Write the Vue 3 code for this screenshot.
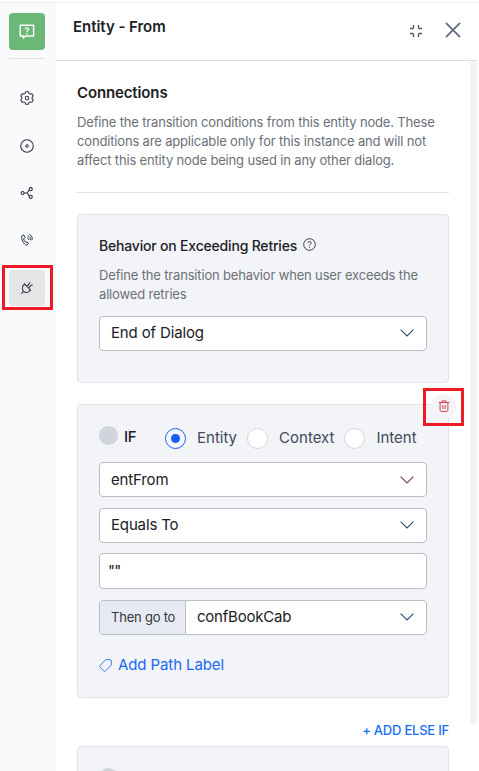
<script setup>
const radios = [
  { label: 'Entity', on: true },
  { label: 'Context', on: false },
  { label: 'Intent', on: false },
]
const selects = ['entFrom', 'Equals To']
</script>

<template>
  <div class="page">
    <nav class="side">
      <div class="logo">
        <svg width="16" height="16" viewBox="0 0 16 16" fill="none" stroke="#fff" stroke-width="1.4" stroke-linejoin="round">
          <path d="M1.2 1.2H14.6V12H6.3L4.3 14.1V12H1.2Z" />
          <path d="M6.2 5.2C6.2 3.5 9.6 3.5 9.6 5.2C9.6 6.5 7.9 6.3 7.9 7.8M7.9 8.9V10.2" stroke-width="1.3" />
        </svg>
      </div>
      <div class="rule"></div>
      <div class="item gear">
        <svg width="14" height="14" viewBox="0 0 14 14" fill="none" stroke="#30343c" stroke-width="1.05" stroke-linejoin="round">
          <path d="M5.7 .7H8.3L8.8 2.4L10.1 3.1L11.9 2.7L13.3 5L12.1 6.3V7.7L13.3 9L11.9 11.3L10.1 10.9L8.8 11.6L8.3 13.3H5.7L5.2 11.6L3.9 10.9L2.1 11.3L.7 9L1.9 7.7V6.3L.7 5L2.1 2.7L3.9 3.1L5.2 2.4Z" />
          <circle cx="7" cy="7" r="1.8" />
        </svg>
      </div>
      <div class="item">
        <svg width="14" height="14" viewBox="0 0 14 14" fill="none" stroke="#30343c" stroke-width="1.05">
          <circle cx="7" cy="7" r="6.3" />
          <circle cx="7" cy="7" r="1.25" />
        </svg>
      </div>
      <div class="item">
        <svg width="14" height="14" viewBox="0 0 14 14" fill="none" stroke="#30343c" stroke-width="1.1">
          <circle cx="2.6" cy="7" r="1.5" />
          <circle cx="10.7" cy="3.2" r="1.6" />
          <circle cx="10.7" cy="10.8" r="1.6" />
          <path d="M4.1 7H7L9.3 4.2M7 7L9.3 9.8" />
        </svg>
      </div>
      <div class="item">
        <svg width="14" height="14" viewBox="0 0 14 14" fill="none" stroke="#30343c" stroke-width="1" stroke-linejoin="round">
          <path d="M2 2.7L3.9 2.1L5 4.4L3.6 5.9C4 7.3 4.7 8.5 5.8 9.4L7.4 8.9L8.3 10.8L6.7 12.2C3.8 11.8 .7 5.8 2 2.7Z" />
          <path d="M7 4.7C8.1 5 8.6 6 8.3 7M7.8 2.9C9.9 3.3 10.9 5.3 10.2 7.3M9.5 1.5C11.8 2.5 12.8 5 11.9 7.3" />
        </svg>
      </div>
      <div class="item active">
        <svg width="14" height="14" viewBox="0 0 14 14" fill="none" stroke="#30343c" stroke-width="1.05" stroke-linejoin="round">
          <path d="M1.4 12.6L3.2 10.8M4 2.4L10.9 9.3M4.6 3C2.9 4.4 2.1 5.6 2.4 7.6C2.7 9.7 4.3 11.3 6.4 11.5C8.3 11.7 9.2 10.9 10.3 8.7M6.2 4.6C8.1 4.8 8.5 3.8 9 2.8L10 1.4M9 7.4C8.7 5.6 10 5.1 11 4.5L12.6 3.8" />
        </svg>
        <span class="mark mark-side"></span>
      </div>
    </nav>

    <section class="panel">
      <header class="head">
        <h1>Entity - From</h1>
        <svg class="shrink" width="14" height="14" viewBox="0 0 14 14" fill="none" stroke="#55595f" stroke-width="1.3">
          <path d="M4.5 1V3.6Q4.5 4.5 3.6 4.5H1M9.5 1V3.6Q9.5 4.5 10.4 4.5H13M4.5 13V10.4Q4.5 9.5 3.6 9.5H1M9.5 13V10.4Q9.5 9.5 10.4 9.5H13" />
        </svg>
        <svg class="close" width="16" height="16" viewBox="0 0 16 16" fill="none" stroke="#5f6b82" stroke-width="1.8" stroke-linecap="round">
          <path d="M1.4 1.4L14.6 14.6M14.6 1.4L1.4 14.6" />
        </svg>
      </header>

      <div class="body">
        <main class="content">
          <h2>Connections</h2>
          <p class="desc intro">Define the transition conditions from this entity node. These<br>conditions are applicable only for this instance and will not<br>affect this entity node being used in any other dialog.</p>

          <div class="card retries">
            <h3>
              <span>Behavior on Exceeding Retries</span>
              <svg width="13" height="13" viewBox="0 0 13 13" fill="none" stroke="#3b3f46" stroke-width="1">
                <circle cx="6.5" cy="6.5" r="5.8" />
                <path d="M4.8 5.2C4.8 2.9 8.2 3 8.2 5C8.2 6.3 6.5 6.2 6.5 7.6M6.5 8.8V9.8" />
              </svg>
            </h3>
            <p class="desc">Define the transition behavior when user exceeds the<br>allowed retries</p>
            <div class="field">
              <span class="up">End of Dialog</span>
              <svg class="chev up" viewBox="0 0 14 8"><path d="M.6 .6L7 7L13.4 .6" /></svg>
            </div>
          </div>

          <div class="card rule-card">
            <div class="trash">
              <svg width="12" height="12" viewBox="0 0 12 12" fill="none" stroke="#d6404b" stroke-width="1">
                <path d="M.8 2.5H11.2M4 2.5V.9H8V2.5M2.1 2.5V10.2Q2.1 11.4 3.3 11.4H8.7Q9.9 11.4 9.9 10.2V2.5M4.8 5V9M7.2 5V9" />
              </svg>
              <span class="mark mark-trash"></span>
            </div>
            <div class="cond">
              <i class="dot"></i>
              <b>IF</b>
              <label v-for="r in radios" :key="r.label" :class="['radio', { on: r.on }]"><i></i><span>{{ r.label }}</span></label>
            </div>
            <div v-for="s in selects" :key="s" class="field">
              <span :class="{ up: s === 'Equals To' }">{{ s }}</span>
              <svg :class="['chev', { warm: s === 'entFrom', up: s === 'Equals To' }]" viewBox="0 0 14 8"><path d="M.6 .6L7 7L13.4 .6" /></svg>
            </div>
            <div class="field value"><span class="up">""</span></div>
            <div class="field goto">
              <span class="prefix">Then go to</span>
              <span class="up">confBookCab</span>
              <svg class="chev up" viewBox="0 0 14 8"><path d="M.6 .6L7 7L13.4 .6" /></svg>
            </div>
            <div class="path">
              <svg width="13" height="13" viewBox="0 0 13 13" fill="none" stroke="#3d78f5" stroke-width="1" stroke-linejoin="round">
                <path d="M6.7 .7H11.2Q12.3 .7 12.3 1.8V6.2L6.2 12.1Q5.6 12.6 5 12.1L.9 8Q.4 7.3 .9 6.7Z" />
              </svg>
              <span>Add Path Label</span>
            </div>
          </div>

          <div class="else">+ ADD ELSE IF</div>
          <div class="card next"><i class="dot"></i></div>
        </main>
        <div class="scroll"></div>
      </div>
    </section>
  </div>
</template>

<style>
body { margin: 0; overflow: hidden; background: #fff; }
</style>

<style scoped>
.page { box-sizing: border-box; width: 479px; height: 771px; padding-top: 2px; display: flex; overflow: hidden; background: #fff; font-family: Inter, "Liberation Sans", sans-serif; color: #202124; }
.page * { box-sizing: border-box; }
.page svg { display: block; flex: none; }
h1, h2, h3, p { margin: 0; }
.side { width: 56px; flex: none; border-top: 1px solid #eceef0; background: #f8fafc; padding: 10px 11px 0 9px; display: flex; flex-direction: column; }
.logo { height: 37px; border-radius: 4px; background: #6bb776; display: flex; align-items: center; justify-content: center; }
.rule { height: 1px; background: #dddfe3; margin: 8px 0 21px; }
.item { height: 36px; margin-bottom: 11px; flex: none; display: flex; align-items: center; justify-content: center; border-radius: 4px; position: relative; }
.gear { margin-bottom: 12px; }
.active { background: #e4e5e7; margin-top: 1px; }
.mark { position: absolute; border: 3px solid #ed1c24; }
.mark-side { left: -7px; top: -5px; width: 51px; height: 45px; }
.panel { flex: 1; min-width: 0; border-top: 1px solid #eceef0; display: flex; flex-direction: column; }
.head { height: 58px; width: 421px; border-bottom: 1px solid #dcdee1; display: flex; padding: 14px 16px 0 17px; }
h1 { flex: 1; font-size: 15px; line-height: 20px; font-weight: 600; letter-spacing: -.04px; }
.shrink { margin: 7px 22px 0 0; }
.close { margin-top: 5px; }
.body { flex: 1; min-height: 0; display: flex; width: 421px; justify-content: space-between; }
.content { padding-left: 21px; width: 393px; }
.scroll { width: 7px; height: 664px; border-radius: 4px; background: #f2f3f8; }
h2 { font-size: 15px; font-weight: 600; line-height: 20px; margin-top: 22px; letter-spacing: -.13px; }
.desc { font-size: 13px; line-height: 19px; color: #6b7077; letter-spacing: -.165px; white-space: nowrap; }
.intro { margin-top: 10px; height: 80px; border-bottom: 1px solid #dfe1e5; }
.card { border: 1px solid #e1e3e7; border-radius: 4px; background: #f3f4f8; padding: 0 21px; position: relative; }
.retries { height: 169px; margin-top: 21px; padding-top: 21px; }
h3 { display: flex; gap: 6px; font-size: 14px; line-height: 20px; font-weight: 500; letter-spacing: -.19px; white-space: nowrap; }
h3 svg { margin-top: 2px; }
.retries .desc { margin-top: 10px; margin-bottom: 12px; }
.field { height: 35px; border: 1px solid #b9bdc5; border-radius: 4px; background: #fff; padding: 0 12px 0 11px; display: flex; align-items: center; justify-content: space-between; font-size: 15px; letter-spacing: -.15px; white-space: nowrap; margin-bottom: 11px; }
.up { margin-bottom: 2px; }
.chev { width: 14px; height: 8px; fill: none; stroke: #244b70; stroke-width: 1.1; }
.chev.warm { stroke: #704438; }
.rule-card { height: 294px; margin-top: 21px; padding-top: 20px; }
.cond { height: 37px; display: flex; align-items: center; white-space: nowrap; padding-bottom: 11px; }
.dot { display: block; width: 19px; height: 19px; border-radius: 50%; background: #d0d5dd; flex: none; }
.cond .dot { margin-top: -5px; }
.cond b { font-size: 15px; font-weight: 500; letter-spacing: -.3px; width: 41px; margin-left: 6px; margin-top: -3px; }
.radio { display: flex; align-items: center; gap: 11px; font-size: 15px; color: #424858; letter-spacing: 0; margin-right: 10px; }
.radio span { margin-top: -2px; }
.radio:last-child { margin-right: 0; }
.radio i { width: 21px; height: 21px; flex: none; border: 1px solid #d0d5dd; border-radius: 50%; background: #fff; display: flex; align-items: center; justify-content: center; }
.radio.on i { border: 1px solid #155eef; background: #f3f7ff; }
.radio.on i::after { content: ""; width: 9px; height: 9px; border-radius: 50%; background: #155eef; }
.value { height: 36px; margin-top: -1px; padding-left: 8px; letter-spacing: -.7px; }
.goto { padding-left: 0; letter-spacing: -.22px; }
.prefix { align-self: stretch; width: 86px; border-right: 1px solid #b9bdc5; border-radius: 3px 0 0 3px; background: #e7eaf2; padding: 0 0 1px 11px; margin-right: 11px; display: flex; align-items: center; font-size: 13px; color: #34373c; }
.goto .chev { margin-left: auto; }
.path { display: flex; gap: 6px; align-items: center; font-size: 15px; line-height: 20px; color: #1769f5; letter-spacing: -.1px; margin-top: 20px; white-space: nowrap; }
.trash { position: absolute; right: -8px; top: -11px; width: 25px; height: 25px; border-radius: 50%; background: #f3f4f8; display: flex; align-items: center; justify-content: center; }
.trash svg { margin-bottom: 1px; }
.mark-trash { left: -8px; top: -6px; width: 41px; height: 38px; }
.else { height: 48px; padding-top: 22px; line-height: 20px; font-size: 13px; font-weight: 500; letter-spacing: -.22px; color: #1570ef; text-align: right; white-space: nowrap; }
.next { height: 60px; padding-top: 21px; }
</style>
